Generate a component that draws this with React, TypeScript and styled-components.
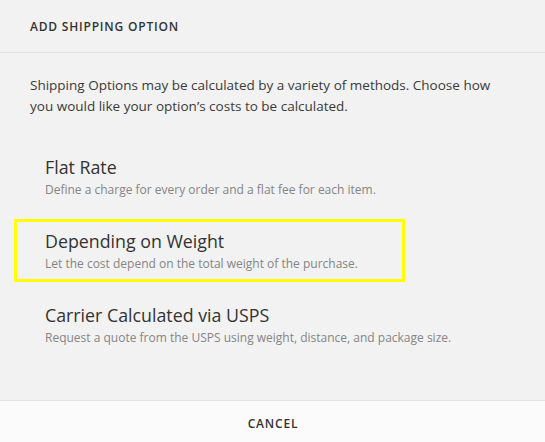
import styled, { createGlobalStyle } from 'styled-components';

const GlobalStyle = createGlobalStyle`
    html, body {
        margin: 0;
        padding: 0;
        background: #f2f2f2;
    }
    body {
        font-family: "Open Sans", "Noto Sans", "Liberation Sans", sans-serif;
        -webkit-font-smoothing: antialiased;
    }
`;

const Dialog = styled.div`
    display: flex;
    flex-direction: column;
    width: 545px;
    height: 442px;
    background: #f2f2f2;
    color: #333;
`;

const Header = styled.div`
    display: flex;
    align-items: center;
    height: 53px;
    padding: 1px 30px 0;
    box-sizing: border-box;
    border-bottom: 1px solid #e0e0e0;
    font-size: 12px;
    font-weight: 600;
    letter-spacing: 0.8px;
    color: #333;
`;

const Body = styled.div`
    flex: 1;
    padding: 22px 0 0;
`;

const Intro = styled.p`
    margin: 0 0 28px;
    padding: 0 30px;
    font-size: 13.5px;
    line-height: 21px;
    color: #3a3a3a;
`;

const OptionList = styled.div`
    display: flex;
    flex-direction: column;
    gap: 11px;
    padding-left: 14px;
`;

const Option = styled.div<{ $active?: boolean }>`
    box-sizing: border-box;
    width: 391px;
    height: 63px;
    padding: 7px 28px 0;
    border: 3px solid ${p => (p.$active ? '#ffff00' : 'transparent')};
    white-space: nowrap;
    cursor: pointer;
`;

const OptionTitle = styled.div`
    font-size: 17.8px;
    line-height: 24px;
    color: #333;
`;

const OptionText = styled.div`
    margin-top: 3px;
    font-size: 12px;
    line-height: 16px;
    color: #858585;
`;

const Footer = styled.div`
    display: flex;
    align-items: center;
    justify-content: center;
    height: 42px;
    box-sizing: border-box;
    padding: 3px 0 0 1px;
    background: #fbfbfb;
    border-top: 1px solid #e3e3e3;
    font-size: 12px;
    font-weight: 600;
    letter-spacing: 0.8px;
    color: #333;
`;

const options = [
    { title: 'Flat Rate', text: 'Define a charge for every order and a flat fee for each item.' },
    { title: 'Depending on Weight', text: 'Let the cost depend on the total weight of the purchase.', active: true },
    { title: 'Carrier Calculated via USPS', text: 'Request a quote from the USPS using weight, distance, and package size.' },
];

export default function App() {
    return <>
        <GlobalStyle />
        <Dialog>
            <Header>ADD SHIPPING OPTION</Header>
            <Body>
                <Intro>
                    Shipping Options may be calculated by a variety of methods. Choose how<br />
                    you would like your option’s costs to be calculated.
                </Intro>
                <OptionList>
                    {options.map(o =>
                        <Option key={o.title} $active={o.active}>
                            <OptionTitle>{o.title}</OptionTitle>
                            <OptionText>{o.text}</OptionText>
                        </Option>
                    )}
                </OptionList>
            </Body>
            <Footer>CANCEL</Footer>
        </Dialog>
    </>
}
